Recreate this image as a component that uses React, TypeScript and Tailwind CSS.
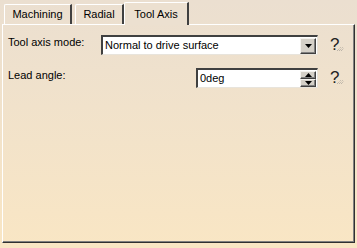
import * as React from "react"

const font = { fontFamily: '"Liberation Sans", Arial, sans-serif' }

const Tab: React.FC<{ label: string; active?: boolean; w: string }> = ({ label, active, w }) => (
  <div
    className={
      (active
        ? "relative z-10 -mb-px h-[23px] pt-[5px] bg-[#ece0d0] "
        : "h-[20px] pt-[3px] ") +
      "flex justify-center border-l border-t border-white border-r-2 border-r-[#404040] text-[11px] leading-[13px] text-black rounded-tl-[2px] " +
      w
    }
  >
    {label}
  </div>
)

const HelpMark: React.FC = () => (
  <div className="flex items-start w-[18px] h-[18px]">
    <span className="text-[17px] leading-[17px] text-[#222]">?</span>
    <svg width="8" height="7" viewBox="0 0 8 7" className="mt-[9px] -ml-[2px]">
      <path d="M0 6 L4 2 M2 6 L6 2 M4 6 L7 3" stroke="#a8a39a" strokeWidth="1" strokeDasharray="1 1" fill="none" />
    </svg>
  </div>
)

const BevelButton: React.FC<{ children: React.ReactNode; className?: string }> = ({ children, className }) => (
  <div
    className={
      "flex items-center justify-center bg-[#d4d0c8] border-t border-l border-[#f4f2ee] border-r border-b border-r-[#404040] border-b-[#404040] shadow-[inset_-1px_-1px_0_#808080] " +
      (className || "")
    }
  >
    {children}
  </div>
)

export default function App() {
  return (
    <div
      className="w-[357px] h-[248px] bg-gradient-to-b from-[#ebdfd0] to-[#f9e6c4] flex flex-col overflow-hidden"
      style={font}
    >
      {/* tab strip */}
      <div className="flex items-end pl-[4px] pt-[2px]">
        <Tab label="Machining" w="w-[68px]" />
        <div className="w-[3px]" />
        <Tab label="Radial" w="w-[49px]" />
        <Tab label="Tool Axis" active w="w-[65px]" />
      </div>

      {/* tab panel */}
      <div className="mx-[2px] w-[353px] h-[219px] border-l border-t border-white border-r border-b border-r-[#303030] border-b-[#303030] shadow-[inset_-1px_-1px_0_#808080] pl-[5px] pt-[10px] flex flex-col gap-[13px]">
        <div className="flex items-start">
          <span className="w-[93px] pt-px text-[11px] leading-[13px] text-black">Tool axis mode:</span>
          <div className="flex items-center w-[217px] h-[20px] bg-white border-t-2 border-l-2 border-t-[#404040] border-l-[#404040] border-r border-b border-r-[#e8e4dc] border-b-[#e8e4dc] pl-[2px] pr-[1px]">
            <span className="flex-1 text-[11px] leading-[13px] text-black">Normal to drive surface</span>
            <BevelButton className="w-[16px] h-[16px]">
              <svg width="7" height="4" viewBox="0 0 7 4">
                <path d="M0 0 L7 0 L3.5 4 Z" fill="#000" />
              </svg>
            </BevelButton>
          </div>
          <div className="ml-[12px] mt-[1px]">
            <HelpMark />
          </div>
        </div>

        <div className="flex items-start">
          <span className="w-[188px] pt-px text-[11px] leading-[13px] text-black">Lead angle:</span>
          <div className="flex items-center w-[122px] h-[20px] bg-white border-t-2 border-l-2 border-t-[#404040] border-l-[#404040] border-r border-b border-r-[#e8e4dc] border-b-[#e8e4dc] pl-[2px] pr-[1px]">
            <span className="flex-1 text-[11px] leading-[13px] text-black">0deg</span>
            <div className="flex flex-col">
              <BevelButton className="w-[16px] h-[8px]">
                <svg width="7" height="4" viewBox="0 0 7 4">
                  <path d="M0 4 L7 4 L3.5 0 Z" fill="#000" />
                </svg>
              </BevelButton>
              <BevelButton className="w-[16px] h-[8px]">
                <svg width="7" height="4" viewBox="0 0 7 4">
                  <path d="M0 0 L7 0 L3.5 4 Z" fill="#000" />
                </svg>
              </BevelButton>
            </div>
          </div>
          <div className="ml-[12px] mt-[1px]">
            <HelpMark />
          </div>
        </div>
      </div>
    </div>
  )
}
